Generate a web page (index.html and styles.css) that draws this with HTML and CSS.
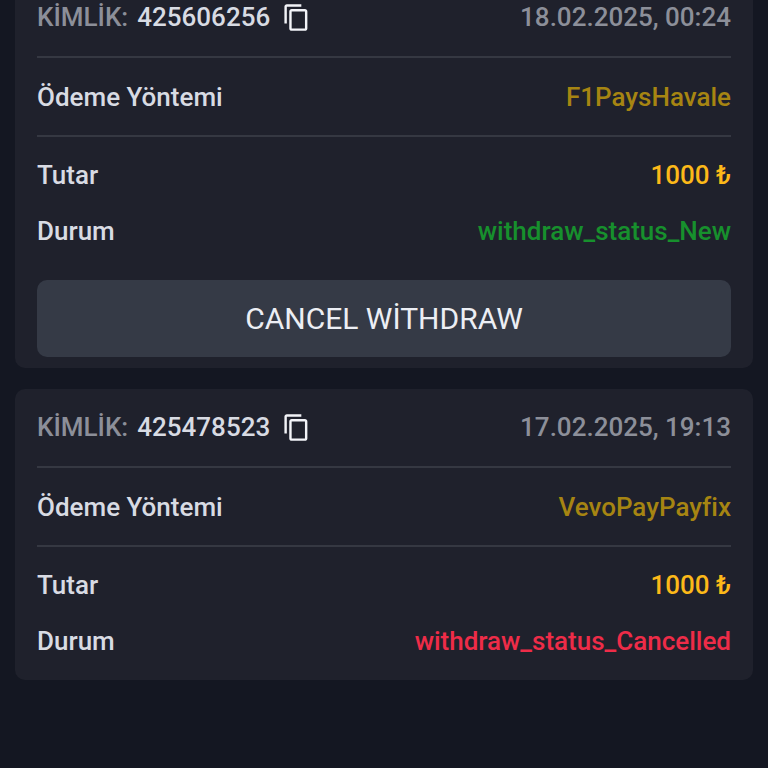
FILE: index.html
```html
<!DOCTYPE html>
<html lang="tr">
<head>
<meta charset="utf-8">
<title>Withdrawals</title>
<link rel="stylesheet" href="styles.css">
</head>
<body>
<main class="list">
  <section class="card">
    <div class="head">
      <div class="id"><span class="id-label">KİMLİK:</span><span class="id-value">425606256</span>
        <svg class="copy" viewBox="0 0 24 24" width="29" height="29"><path fill="currentColor" d="M16 1H4c-1.1 0-2 .9-2 2v14h2V3h12V1zm3 4H8c-1.1 0-2 .9-2 2v14c0 1.1.9 2 2 2h11c1.1 0 2-.9 2-2V7c0-1.100-.9-2-2-2zm0 16H8V7h11v14z"/></svg>
      </div>
      <span class="date">18.02.2025, 00:24</span>
    </div>
    <div class="method"><span class="label">Ödeme Yöntemi</span><span class="method-name">F1PaysHavale</span></div>
    <div class="info">
      <div class="row"><span class="label">Tutar</span><span class="amount">1000 ₺</span></div>
      <div class="row"><span class="label">Durum</span><span class="status-new">withdraw_status_New</span></div>
    </div>
    <button class="cancel" type="button">CANCEL WİTHDRAW</button>
  </section>
  <section class="card">
    <div class="head">
      <div class="id"><span class="id-label">KİMLİK:</span><span class="id-value">425478523</span>
        <svg class="copy" viewBox="0 0 24 24" width="29" height="29"><path fill="currentColor" d="M16 1H4c-1.1 0-2 .9-2 2v14h2V3h12V1zm3 4H8c-1.1 0-2 .9-2 2v14c0 1.1.9 2 2 2h11c1.1 0 2-.9 2-2V7c0-1.100-.9-2-2-2zm0 16H8V7h11v14z"/></svg>
      </div>
      <span class="date">17.02.2025, 19:13</span>
    </div>
    <div class="method"><span class="label">Ödeme Yöntemi</span><span class="method-name">VevoPayPayfix</span></div>
    <div class="info">
      <div class="row"><span class="label">Tutar</span><span class="amount">1000 ₺</span></div>
      <div class="row"><span class="label">Durum</span><span class="status-cancelled">withdraw_status_Cancelled</span></div>
    </div>
  </section>
</main>
</body>
</html>
```
FILE: styles.css
```css
* { box-sizing: border-box; }
html, body { margin: 0; height: 100%; overflow: hidden; }
body {
  background: #141722;
  font-family: Roboto, "Liberation Sans", sans-serif;
  font-size: 26px;
  font-weight: 500;
  color: #d8dbe3;
}
.list {
  display: flex;
  flex-direction: column;
  gap: 21px;
  margin-top: -21px;
  padding: 0 15px;
}
.card {
  background: #1f212c;
  border-radius: 10px;
  padding: 18px 22px 11px;
}
.head, .method, .row {
  display: flex;
  justify-content: space-between;
  align-items: center;
}
.head { height: 40px; margin-bottom: 19px; }
.id { display: flex; align-items: center; }
.id-label { color: #8c8f99; margin-right: 9px; }
.id-value { color: #d8dbe3; margin-right: 12px; }
.copy { color: #f2f3f7; display: block; }
.date { color: #8c8f99; }
.method {
  height: 81px;
  border-top: 2px solid #353842;
  border-bottom: 2px solid #353842;
}
.method-name { color: #a68512; }
.info { padding-top: 10px; }
.row { height: 56px; }
.amount { color: #fcb919; }
.status-new { color: #17902d; }
.status-cancelled { color: #ee2c48; }
.cancel {
  display: block;
  width: 100%;
  height: 77px;
  margin-top: 21px;
  border: 0;
  border-radius: 10px;
  background: #353a46;
  color: #eceef4;
  font: 400 30px Roboto, "Liberation Sans", sans-serif;
}
```
